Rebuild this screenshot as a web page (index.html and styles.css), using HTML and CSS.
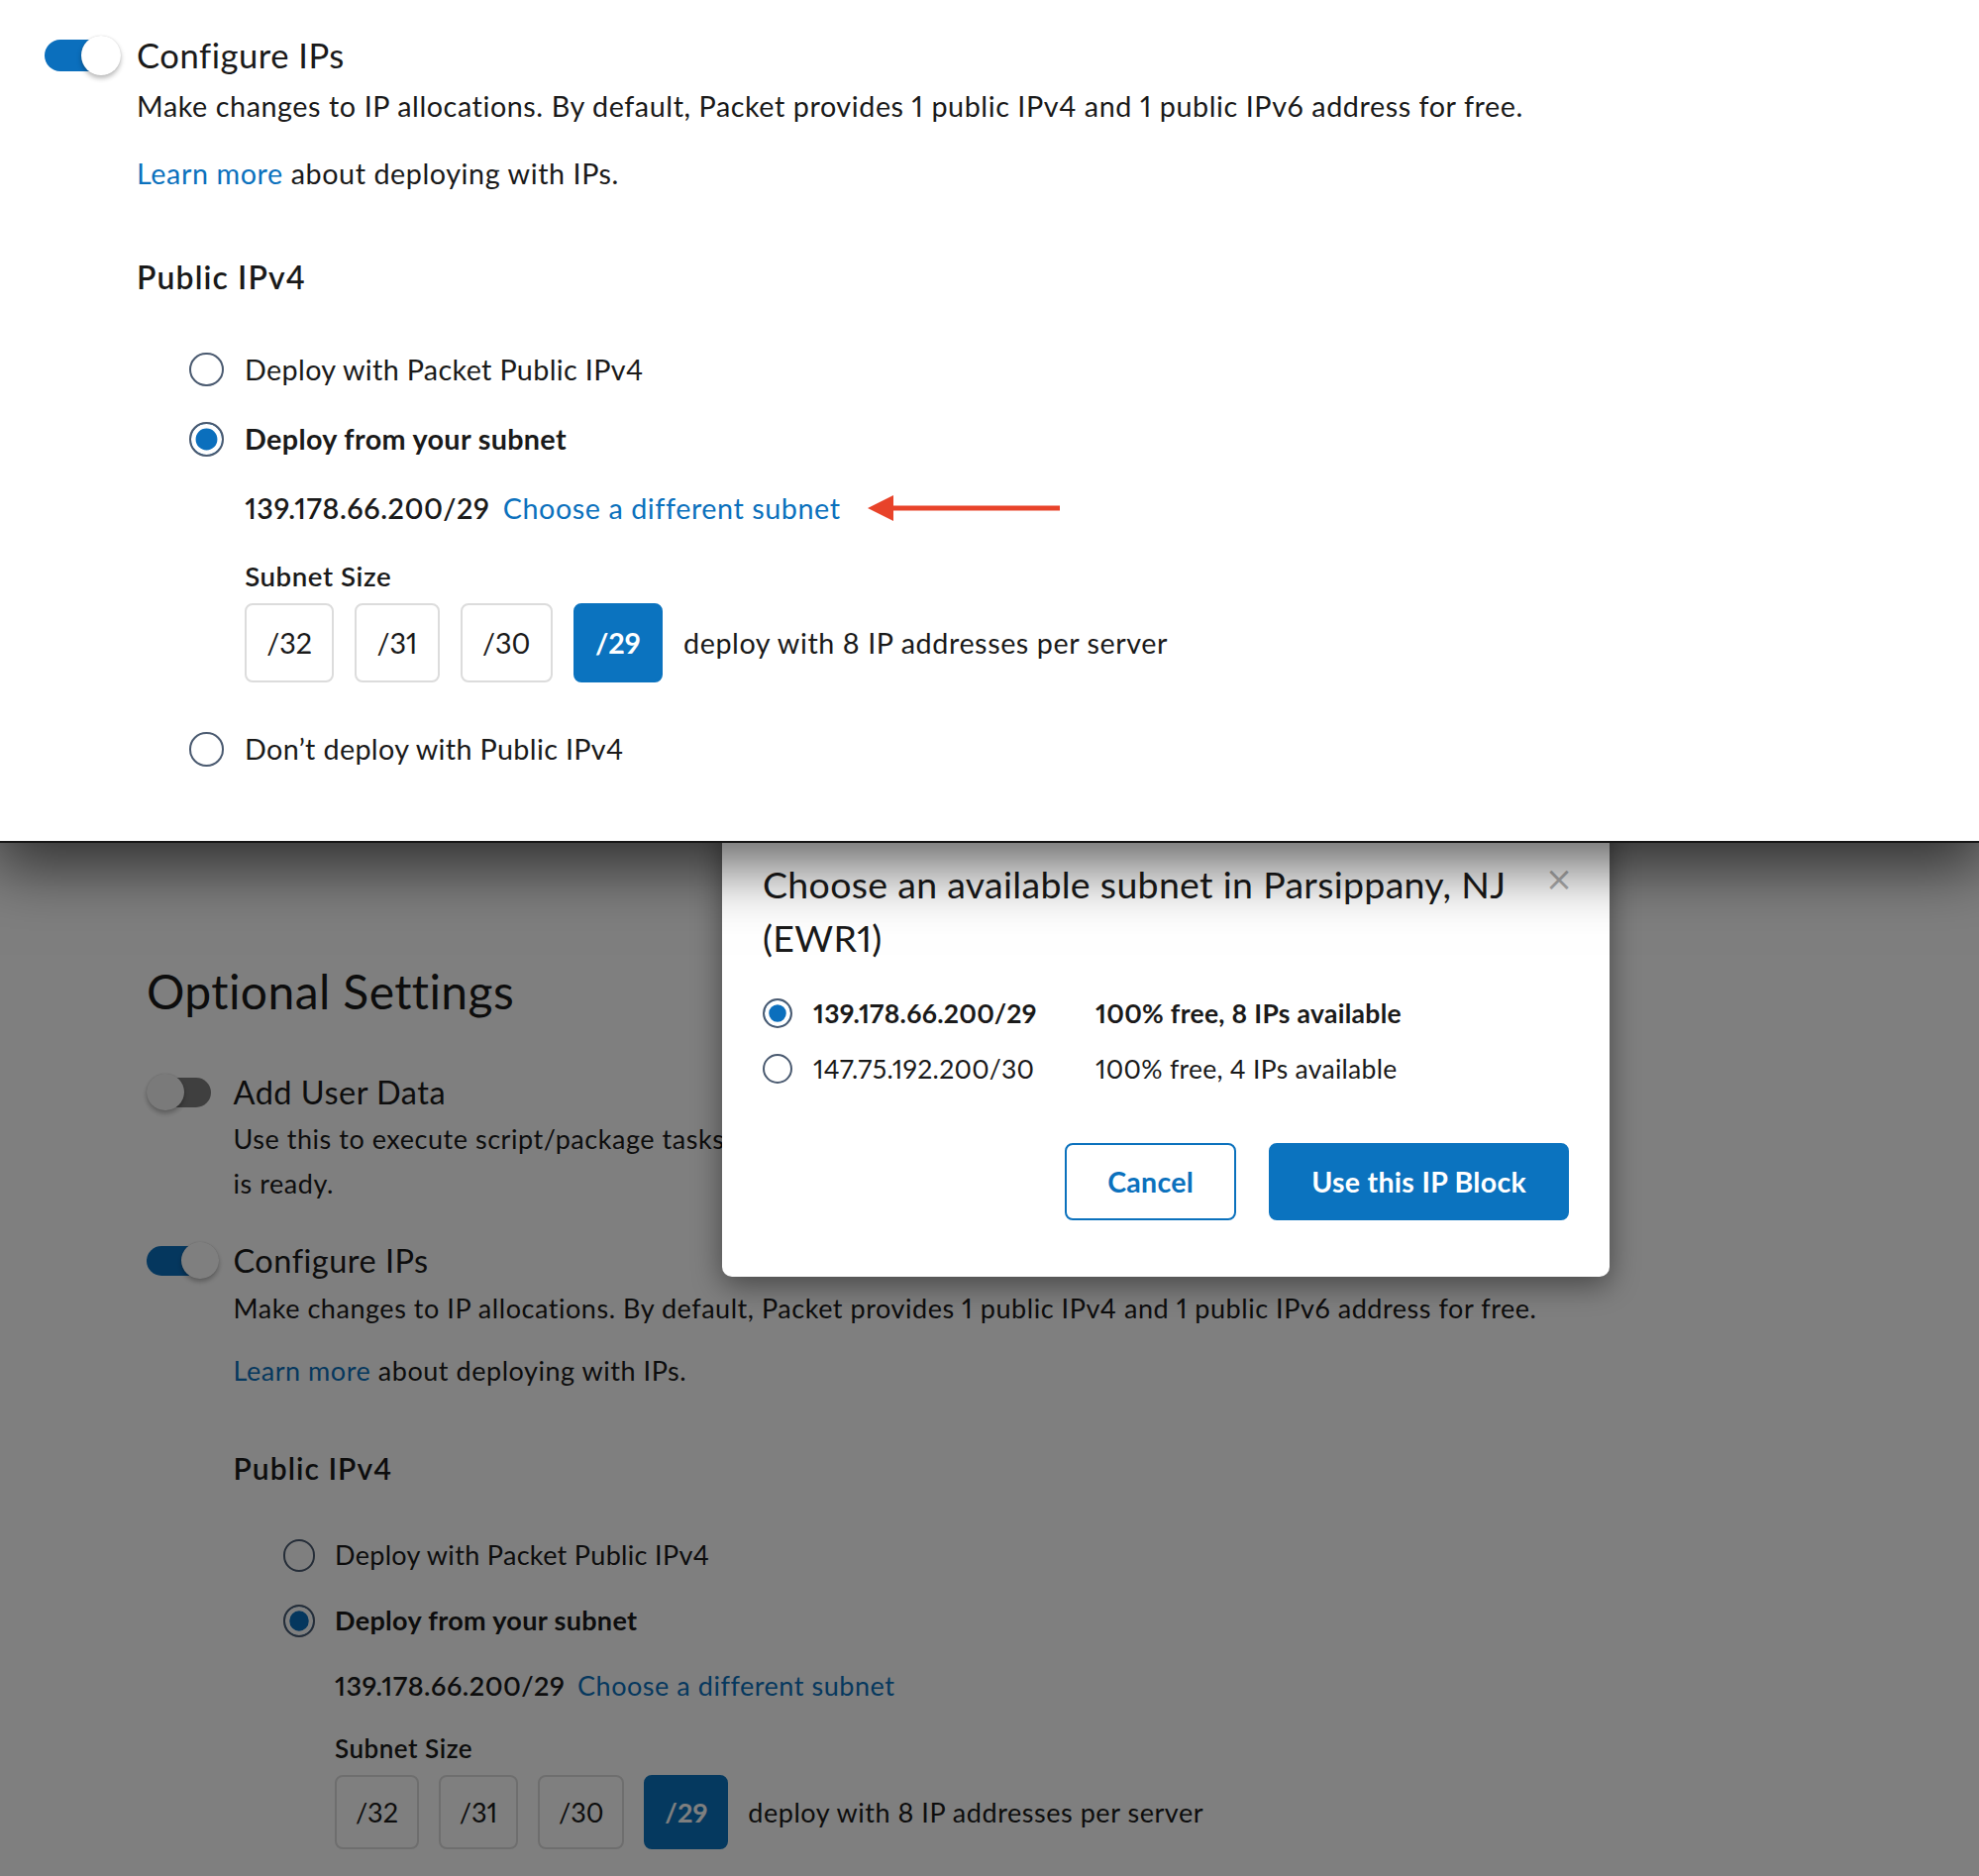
FILE: index.html
```html
<!DOCTYPE html>
<html lang="en">
<head>
<meta charset="utf-8">
<title>Configure IPs</title>
<link rel="stylesheet" href="styles.css">
</head>
<body>
<div class="screen">
  <section class="panel">
    <div class="setting">
      <span class="toggle on"><span class="track"></span><span class="knob"></span></span>
      <div class="setting-body">
        <div class="setting-title">Configure IPs</div>
        <p class="desc">Make changes to IP allocations. By default, Packet provides 1 public IPv4 and 1 public IPv6 address for free.</p>
        <p class="desc learn"><a class="link" href="#">Learn more</a> about deploying with IPs.</p>
        <h3 class="subhead">Public IPv4</h3>
        <div class="radios">
          <div class="radio-row"><span class="radio"></span>Deploy with Packet Public IPv4</div>
          <div class="radio-row selected"><span class="radio checked"></span>Deploy from your subnet</div>
          <div class="subnet-block">
            <div class="subnet-line">
              <span class="ip">139.178.66.200/29</span>
              <a class="link" href="#">Choose a different subnet</a>
              <svg class="arrow" width="196" height="28" viewBox="0 0 196 28"><path d="M0 14 L26 1 L26 27 Z" fill="#e8432a"/><rect x="24" y="11.5" width="170" height="5" fill="#e8432a"/></svg>
            </div>
            <div class="size-label">Subnet Size</div>
            <div class="size-row">
              <span class="size-btn">/32</span>
              <span class="size-btn">/31</span>
              <span class="size-btn">/30</span>
              <span class="size-btn active">/29</span>
              <span class="size-note">deploy with 8 IP addresses per server</span>
            </div>
          </div>
          <div class="radio-row last"><span class="radio"></span>Don’t deploy with Public IPv4</div>
        </div>
      </div>
    </div>
  </section>

  <section class="page">
    <h2 class="page-title">Optional Settings</h2>

    <div class="setting">
      <span class="toggle off"><span class="track"></span><span class="knob"></span></span>
      <div class="setting-body">
        <div class="setting-title">Add User Data</div>
        <p class="desc">Use this to execute script/package tasks or cloud-init configuration once your server<br>is ready.</p>
      </div>
    </div>

    <div class="setting">
      <span class="toggle on"><span class="track"></span><span class="knob"></span></span>
      <div class="setting-body">
        <div class="setting-title">Configure IPs</div>
        <p class="desc">Make changes to IP allocations. By default, Packet provides 1 public IPv4 and 1 public IPv6 address for free.</p>
        <p class="desc learn"><a class="link" href="#">Learn more</a> about deploying with IPs.</p>
        <h3 class="subhead">Public IPv4</h3>
        <div class="radios">
          <div class="radio-row"><span class="radio"></span>Deploy with Packet Public IPv4</div>
          <div class="radio-row selected"><span class="radio checked"></span>Deploy from your subnet</div>
          <div class="subnet-block">
            <div class="subnet-line">
              <span class="ip">139.178.66.200/29</span>
              <a class="link" href="#">Choose a different subnet</a>
            </div>
            <div class="size-label">Subnet Size</div>
            <div class="size-row">
              <span class="size-btn">/32</span>
              <span class="size-btn">/31</span>
              <span class="size-btn">/30</span>
              <span class="size-btn active">/29</span>
              <span class="size-note">deploy with 8 IP addresses per server</span>
            </div>
          </div>
        </div>
      </div>
    </div>

    <div class="backdrop"></div>

    <div class="modal">
      <button class="modal-close" type="button">×</button>
      <h2 class="modal-title">Choose an available subnet in Parsippany, NJ (EWR1)</h2>
      <div class="subnet-options">
        <div class="option selected"><span class="radio checked"></span><span class="opt-ip">139.178.66.200/29</span><span class="opt-stat">100% free, 8 IPs available</span></div>
        <div class="option"><span class="radio"></span><span class="opt-ip">147.75.192.200/30</span><span class="opt-stat">100% free, 4 IPs available</span></div>
      </div>
      <div class="modal-actions">
        <button class="btn btn-outline" type="button">Cancel</button>
        <button class="btn btn-primary" type="button">Use this IP Block</button>
      </div>
    </div>
  </section>
</div>
</body>
</html>
```

FILE: styles.css
```css
* { box-sizing: border-box; }

html, body {
  margin: 0;
  padding: 0;
  background: #ffffff;
}

body {
  font-family: "Lato", "Open Sans", sans-serif;
  font-variant-numeric: proportional-nums;
  color: #1a1a1a;
  width: 1998px;
  height: 1894px;
  overflow: hidden;
}

.screen {
  display: flex;
  flex-direction: column;
  height: 1894px;
}

/* ---------- zoomed callout panel ---------- */
.panel {
  position: relative;
  z-index: 5;
  flex: 0 0 851px;
  height: 851px;
  background: #ffffff;
  padding: 35px 0 0 45px;
  font-size: 26.6px;
  border-bottom: 2px solid #161616;
  box-shadow: 0 18px 60px 6px rgba(0, 0, 0, 0.62);
}

/* ---------- dimmed page ---------- */
.page {
  position: relative;
  flex: 1 1 auto;
  overflow: hidden;
  padding: 122px 0 0 148px;
  font-size: 25px;
  background: #ffffff;
}

.page-title {
  margin: 0 0 54.5px 0;
  font-size: 48px;
  line-height: 55px;
  font-weight: 400;
  letter-spacing: 0.4px;
}

/* ---------- setting block ---------- */
.setting {
  display: grid;
  grid-template-columns: 3.5em 1fr;
  margin-bottom: 1.44em;
}

.setting-body { min-width: 0; }

.setting-title {
  font-size: 1.3em;
  height: 1.231em;
  line-height: 1.231em;
  letter-spacing: 0.015em;
}

.desc {
  margin: 0.222em 0 0 0;
  font-size: 1.08em;
  line-height: 1.63em;
  letter-spacing: 0.02em;
}

.desc.learn { margin-top: 0.74em; }

.link {
  color: #0b71bd;
  text-decoration: none;
}

.subhead {
  margin: 1.897em 0 0 0;
  font-size: 1.2em;
  line-height: 1.333em;
  height: 1.333em;
  font-weight: 600;
  letter-spacing: 0.035em;
}

/* ---------- toggle ---------- */
.toggle {
  position: relative;
  display: block;
  width: 2.9em;
  height: 1.6em;
}

.toggle .track {
  position: absolute;
  top: 0.2em;
  height: 1.2em;
  border-radius: 0.6em;
}

.toggle .knob {
  position: absolute;
  top: 0.05em;
  width: 1.5em;
  height: 1.5em;
  border-radius: 50%;
  background: #ffffff;
  box-shadow: 0 3px 5px rgba(0, 0, 0, 0.28), 0 0 1px rgba(0, 0, 0, 0.2);
}

.toggle.on .track { left: 0; width: 2.3em; background: #0b6fbd; }
.toggle.on .knob { left: 1.4em; }

.toggle.off .track { left: 0.5em; width: 2.1em; background: #7e7e7e; }
.toggle.off .knob { left: 0; background: #f4f4f4; }

/* ---------- radios ---------- */
.radios {
  margin: 1.88em 0 0 2em;
  display: flex;
  flex-direction: column;
}

.radio-row {
  display: flex;
  align-items: center;
  gap: 0.74em;
  font-size: 1.08em;
  letter-spacing: 0.012em;
  height: 1.481em;
  line-height: 1.481em;
}

.radio-row + .radio-row { margin-top: 0.963em; }
.radio-row.last { margin-top: 1.6em; }
.radio-row.selected { font-weight: 700; }

.radio {
  flex: 0 0 auto;
  width: 1.204em;
  height: 1.204em;
  border-radius: 50%;
  border: 2px solid #4a5a70;
  background: #ffffff;
}

.radio.checked {
  background: #0b6fbd;
  box-shadow: inset 0 0 0 0.16em #ffffff;
}

.subnet-block {
  margin: 1em 0 0 2.1em;
}

.subnet-line {
  display: flex;
  align-items: center;
  font-size: 1.08em;
  letter-spacing: 0.02em;
  height: 1.481em;
  gap: 0.463em;
}

.ip { font-weight: 600; }

.arrow {
  margin-left: 0.5em;
  flex: 0 0 auto;
}

.size-label {
  margin-top: 1.154em;
  font-size: 1.04em;
  letter-spacing: 0.02em;
  line-height: 1.15em;
  height: 1.15em;
  font-weight: 600;
}

.size-row {
  margin-top: 0.44em;
  display: flex;
  align-items: center;
  gap: 0.8em;
}

.size-btn {
  display: flex;
  align-items: center;
  justify-content: center;
  height: 2.778em;
  padding: 0 0.7em;
  font-size: 1.08em;
  border: 2px solid #dcdcdc;
  border-radius: 8px;
  background: #ffffff;
}

.size-btn.active {
  background: #0b73bf;
  border-color: #0b73bf;
  color: #ffffff;
  font-weight: 700;
}

.size-note {
  font-size: 1.08em;
  letter-spacing: 0.02em;
}

/* ---------- overlay & modal ---------- */
.backdrop {
  position: absolute;
  inset: 0;
  z-index: 1;
  background: rgba(0, 0, 0, 0.5);
}

.modal {
  position: absolute;
  z-index: 2;
  left: 729px;
  top: -30px;
  width: 896px;
  padding: 45px 41px 57px 41px;
  background: #ffffff;
  border-radius: 10px;
  box-shadow: 0 8px 30px rgba(0, 0, 0, 0.45);
  font-size: 26.5px;
  letter-spacing: 0.3px;
}

.modal-close {
  position: absolute;
  top: 48px;
  right: 36px;
  width: 30px;
  height: 36px;
  padding: 0;
  border: 0;
  background: none;
  font-family: "DejaVu Sans", sans-serif;
  font-size: 34px;
  line-height: 36px;
  color: #b4b4b4;
}

.modal-title {
  margin: 0;
  padding-right: 20px;
  font-size: 37.5px;
  line-height: 54px;
  font-weight: 400;
  letter-spacing: 0.3px;
}

.subnet-options {
  margin-top: 29px;
  display: flex;
  flex-direction: column;
  gap: 16px;
}

.option {
  display: grid;
  grid-template-columns: 30px 264px 1fr;
  column-gap: 21px;
  align-items: center;
  height: 40px;
}

.option .radio {
  width: 30px;
  height: 30px;
}

.option.selected { font-weight: 700; }

.modal-actions {
  margin-top: 55px;
  display: flex;
  justify-content: flex-end;
  gap: 33px;
}

.btn {
  height: 78px;
  padding: 0 41px;
  border-radius: 8px;
  font-family: inherit;
  font-size: 28.5px;
  font-weight: 700;
  letter-spacing: 0.3px;
  cursor: pointer;
}

.btn-outline {
  background: #ffffff;
  color: #0b71bd;
  border: 2px solid #0b71bd;
}

.btn-primary {
  background: #0b73bf;
  color: #ffffff;
  border: 2px solid #0b73bf;
}
```
